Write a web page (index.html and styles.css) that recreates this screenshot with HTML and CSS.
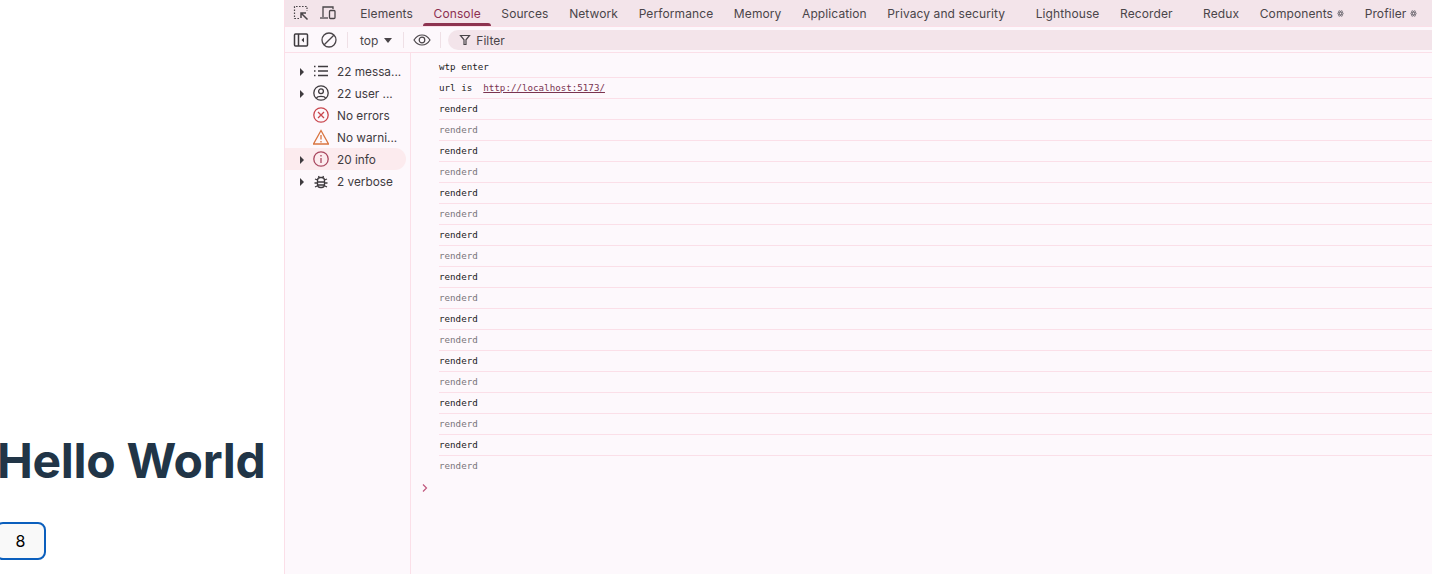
FILE: index.html
```html
<!DOCTYPE html>
<html lang="en">
<head>
<meta charset="utf-8">
<title>Hello World</title>
<link rel="stylesheet" href="styles.css">
</head>
<body>
<main class="app">
  <section class="page">
    <h1 class="title">Hello World</h1>
    <button class="counter">8</button>
  </section>
  <section class="devtools">
    <header class="tabbar">
      <div class="tabtools">
        <svg class="ico" viewBox="0 0 18 18" width="18" height="18" fill="none" stroke="#4a4549" stroke-width="1.2"><path d="M7 14.5H2.5V2.5H15V7" stroke-dasharray="1.6 1.4"/><path d="M15.5 15.5L9.5 9.5M9 14V9H14" stroke-width="1.5"/></svg>
        <svg class="ico" viewBox="0 0 18 18" width="18" height="18" fill="none" stroke="#4a4549" stroke-width="1.3"><path d="M4 13V3H14V5"/><path d="M1 14H9"/><rect x="10.5" y="6.5" width="5.5" height="8" rx="1"/></svg>
      </div>
      <nav class="tabs">
        <span class="tab">Elements</span>
        <span class="tab active">Console</span>
        <span class="tab">Sources</span>
        <span class="tab">Network</span>
        <span class="tab">Performance</span>
        <span class="tab">Memory</span>
        <span class="tab">Application</span>
        <span class="tab wide">Privacy and security</span>
        <span class="tab">Lighthouse</span>
        <span class="tab wide">Recorder</span>
        <span class="tab">Redux</span>
        <span class="tab">Components <svg class="react" viewBox="0 0 8 8" width="7" height="7" fill="none" stroke="#77727a" stroke-width="0.9"><ellipse cx="4" cy="4" rx="3.6" ry="1.4"/><ellipse cx="4" cy="4" rx="3.600" ry="1.400" transform="rotate(60 4 4)"/><ellipse cx="4" cy="4" rx="3.600" ry="1.400" transform="rotate(120 4 4)"/></svg></span>
        <span class="tab">Profiler <svg class="react" viewBox="0 0 8 8" width="7" height="7" fill="none" stroke="#77727a" stroke-width="0.9"><ellipse cx="4" cy="4" rx="3.6" ry="1.4"/><ellipse cx="4" cy="4" rx="3.600" ry="1.400" transform="rotate(60 4 4)"/><ellipse cx="4" cy="4" rx="3.600" ry="1.400" transform="rotate(120 4 4)"/></svg></span>
      </nav>
    </header>
    <div class="filterbar">
      <svg class="ico small" viewBox="0 0 16 16" width="16" height="16" fill="none" stroke="#3f3b3f" stroke-width="1.5"><rect x="1.500" y="2" width="13" height="12" rx="1"/><path d="M5.500 2V14"/><path d="M11 5.500L8.500 8L11 10.500Z" fill="#3f3b3f" stroke="none"/></svg>
      <svg class="ico ban" viewBox="0 0 16 16" width="16" height="16" fill="none" stroke="#4a4549" stroke-width="1.3"><circle cx="8" cy="8" r="7"/><path d="M3.200 12.800L12.800 3.200"/></svg>
      <span class="sep first"></span>
      <span class="context">top <i class="caret"></i></span>
      <span class="sep"></span>
      <svg class="ico eye" viewBox="0 0 18 12" width="18" height="12" fill="none" stroke="#4a4549" stroke-width="1.2"><path d="M1 6C3.500 2 6 1 9 1S14.500 2 17 6C14.500 10 12 11 9 11S3.500 10 1 6Z"/><circle cx="9" cy="6" r="2.800"/></svg>
      <span class="sep"></span>
      <div class="filter">
        <svg viewBox="0 0 12 12" width="12" height="12" fill="none" stroke="#4a4549" stroke-width="1.200"><path d="M1.500 1.500H10.500L7 5.800V10.500H5V5.800Z"/></svg>
        <span>Filter</span>
      </div>
    </div>
    <div class="panes">
      <aside class="sidebar">
        <div class="side-row"><i class="arrow"></i><svg viewBox="0 0 16 16" width="16" height="16" fill="none" stroke="#3f3b3f" stroke-width="1.300"><path d="M5 3.500H15M5 8H15M5 12.500H15M1 3.500H2.500M1 8H2.500M1 12.500H2.500"/></svg><span>22 messa...</span></div>
        <div class="side-row"><i class="arrow"></i><svg viewBox="0 0 16 16" width="16" height="16" fill="none" stroke="#3f3b3f" stroke-width="1.300"><circle cx="8" cy="8" r="7.200"/><circle cx="8" cy="6.300" r="2.400"/><path d="M3.500 13C4.500 10.800 11.500 10.800 12.500 13"/></svg><span>22 user ...</span></div>
        <div class="side-row"><i class="arrow none"></i><svg viewBox="0 0 16 16" width="16" height="16" fill="none" stroke="#c9464d" stroke-width="1.300"><circle cx="8" cy="8" r="7.200"/><path d="M5 5L11 11M11 5L5 11"/></svg><span>No errors</span></div>
        <div class="side-row"><i class="arrow none"></i><svg viewBox="0 0 16 16" width="16" height="16" fill="none" stroke="#d9743f" stroke-width="1.300"><path d="M8 1.500L15.500 15H.5Z"/><path d="M8 6V10.500M8 12V13.500"/></svg><span>No warni...</span></div>
        <div class="side-row selected"><i class="arrow"></i><svg viewBox="0 0 16 16" width="16" height="16" fill="none" stroke="#a9475f" stroke-width="1.300"><circle cx="8" cy="8" r="7.200"/><path d="M8 7V12M8 4V5.500"/></svg><span>20 info</span></div>
        <div class="side-row"><i class="arrow"></i><svg viewBox="0 0 16 16" width="16" height="16" fill="none" stroke="#3f3b3f" stroke-width="1.300"><rect x="4.500" y="4.500" width="7" height="10" rx="3"/><path d="M5.500 3L6.500 5M10.500 3L9.500 5M2 6L4.500 7M14 6L11.500 7M1.500 10H4.500M14.500 10H11.500M2 14L5 12.500M14 14L11 12.500M5 9H11M5 12H11"/></svg><span>2 verbose</span></div>
      </aside>
      <div class="log">
        <div class="msg">wtp enter</div>
        <div class="msg">url is&nbsp; <a class="link">http://localhost:5173/</a></div>
        <div class="msg">renderd</div>
        <div class="msg dim">renderd</div>
        <div class="msg">renderd</div>
        <div class="msg dim">renderd</div>
        <div class="msg">renderd</div>
        <div class="msg dim">renderd</div>
        <div class="msg">renderd</div>
        <div class="msg dim">renderd</div>
        <div class="msg">renderd</div>
        <div class="msg dim">renderd</div>
        <div class="msg">renderd</div>
        <div class="msg dim">renderd</div>
        <div class="msg">renderd</div>
        <div class="msg dim">renderd</div>
        <div class="msg">renderd</div>
        <div class="msg dim">renderd</div>
        <div class="msg">renderd</div>
        <div class="msg dim last">renderd</div>
        <div class="prompt"><svg viewBox="0 0 8 10" width="8" height="10" fill="none" stroke="#c0587e" stroke-width="1.200"><path d="M2 1.500L5.500 5L2 8.500"/></svg></div>
      </div>
    </div>
  </section>
</main>
</body>
</html>
```

FILE: styles.css
```css
* { box-sizing: border-box; }
html, body { margin: 0; height: 100%; overflow: hidden; }
body { background: #fff; font-family: Inter, "Liberation Sans", sans-serif; }
.app { display: flex; width: 1432px; height: 574px; }

.page {
  width: 285px;
  flex: none;
  display: flex;
  flex-direction: column;
  justify-content: flex-end;
  align-items: flex-start;
  padding-bottom: 14px;
  overflow: hidden;
  border-right: 1px solid #fbdfe8;
}
.title {
  margin: 0 0 32px -3px;
  font-size: 48px;
  line-height: 58px;
  font-weight: 700;
  letter-spacing: -0.3px;
  color: #213547;
  white-space: nowrap;
}
.counter {
  width: 51px;
  height: 38px;
  margin-left: -5px;
  border: 2px solid #0b5fbd;
  border-radius: 8px;
  background: #f9f9f9;
  color: #000;
  font: 400 16px Inter, sans-serif;
}

.devtools { flex: 1; min-width: 0; display: flex; flex-direction: column; background: #fdf8fc; }

.tabbar {
  height: 27px;
  display: flex;
  align-items: center;
  background: #f3e4ea;
  border-bottom: 1px solid #fbdfe8;
  padding-left: 7px;
}
.tabtools { display: flex; gap: 9px; width: 58px; flex: none; }
.ico { display: block; flex: none; }
.tabs { display: flex; height: 26px; }
.tab {
  display: flex;
  align-items: center;
  gap: 4px;
  height: 26px;
  padding: 0 10.3px;
  font-size: 12px;
  letter-spacing: 0.1px;
  color: #4a4549;
  white-space: nowrap;
  position: relative;
}
.tab.wide { padding-right: 20.2px; }
.tab.active { color: #8d2f50; }
.tab.active::after {
  content: "";
  position: absolute;
  left: 0;
  right: 0;
  bottom: 0;
  height: 3px;
  background: #8d3350;
  border-radius: 3px 3px 0 0;
}
.react { display: block; flex: none; }

.filterbar {
  height: 26px;
  display: flex;
  align-items: center;
  background: #fdf8fc;
  border-bottom: 1px solid #fbdfe8;
  padding: 1px 0 0 8px;
}
.ico.ban { margin-left: 12px; }
.sep { width: 1px; height: 16px; background: #efe0e6; margin: 0 10px; flex: none; }
.sep.first { margin-right: 12px; }
.context { display: flex; align-items: center; gap: 6px; margin-right: 1px; font-size: 12px; color: #4a4549; }
.caret { width: 0; height: 0; border-left: 4px solid transparent; border-right: 4px solid transparent; border-top: 5px solid #4a4549; }
.eye { margin: 0 -1px; }
.filter {
  flex: 1;
  height: 20px;
  margin-left: -3px;
  display: flex;
  align-items: center;
  gap: 5px;
  padding-left: 11px;
  font-size: 12px;
  color: #4a4549;
  background: #f3e4ea;
  border-radius: 10px 0 0 10px;
}

.panes { flex: 1; display: flex; min-height: 0; }
.sidebar {
  width: 126px;
  flex: none;
  padding-top: 7px;
  border-right: 1px solid #fbdfe8;
}
.side-row {
  display: flex;
  align-items: center;
  height: 22px;
  width: 121px;
  padding-left: 15px;
  font-size: 11.8px;
  color: #3f3b3f;
  white-space: nowrap;
}
.side-row svg { margin-right: 8px; margin-left: 9px; flex: none; }
.side-row span { padding-top: 2px; }
.side-row.selected { background: #fcebee; border-radius: 0 11px 11px 0; }
.arrow {
  width: 4px;
  height: 8px;
  flex: none;
  margin-top: 2px;
  border-left: 4px solid #3f3b3f;
  border-top: 4px solid transparent;
  border-bottom: 4px solid transparent;
}
.arrow.none { border-color: transparent; }

.log { flex: 1; min-width: 0; padding-top: 4px; }
.msg {
  height: 21px;
  margin-left: 28px;
  padding-bottom: 2px;
  display: flex;
  align-items: center;
  white-space: pre;
  font: 9.2px/19px "DejaVu Sans Mono", monospace;
  color: #1b1a1b;
  border-bottom: 1px solid #fbdfe8;
}
.msg.dim { color: #7a757a; }
.msg.last { border-bottom: none; }
.link { color: #7a3450; text-decoration: underline; }
.prompt { height: 21px; display: flex; align-items: center; padding-left: 10px; }
```
